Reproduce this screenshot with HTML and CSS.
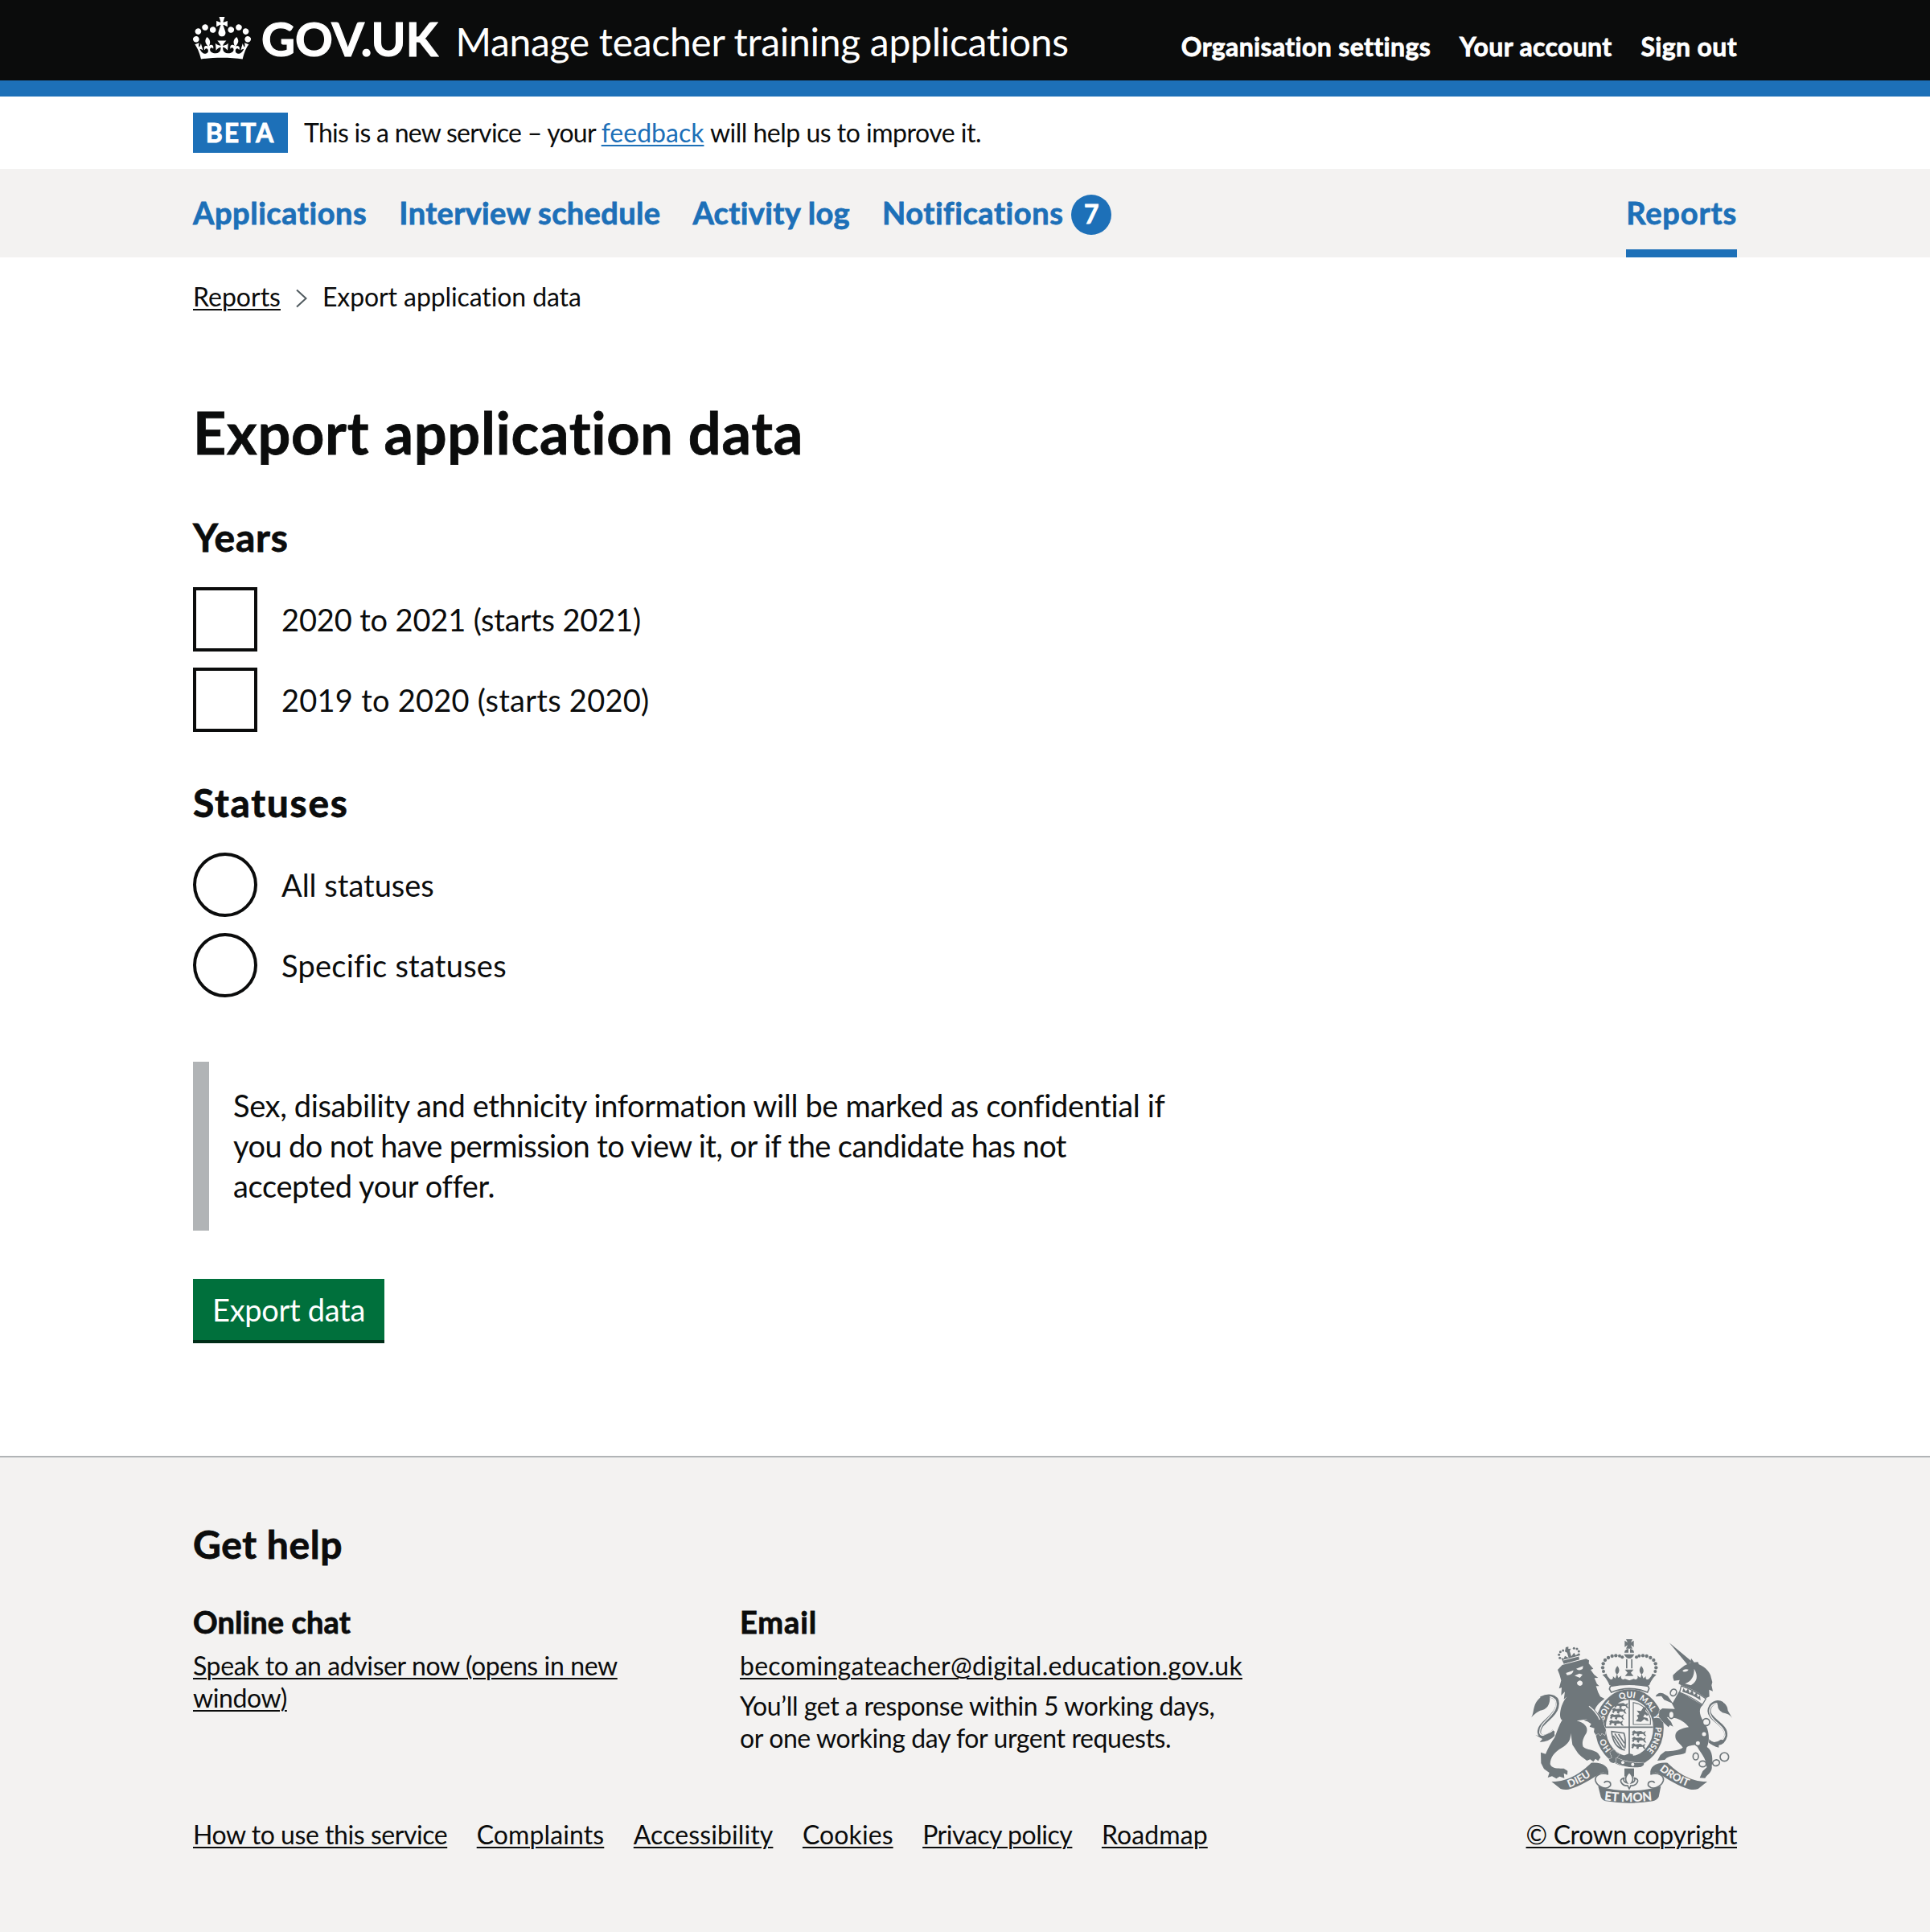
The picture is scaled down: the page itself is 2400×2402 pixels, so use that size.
FILE: index.html
```
<!DOCTYPE html>
<html lang="en">
<head>
<meta charset="utf-8">
<title>Export application data - Manage teacher training applications - GOV.UK</title>
<link rel="stylesheet" href="styles.css">
</head>
<body>
<header class="header">
  <div class="container header-row">
    <svg class="crown" viewBox="0 0 132 97" aria-hidden="true"><path fill="currentColor" fill-rule="evenodd" d="M25 30.2c3.5 1.5 7.7-.2 9.1-3.7 1.5-3.6-.2-7.8-3.9-9.2-3.6-1.4-7.6.3-9.1 3.9-1.4 3.5.3 7.5 3.9 9zM9 39.5c3.6 1.5 7.8-.2 9.2-3.7 1.5-3.6-.2-7.8-3.9-9.1-3.6-1.5-7.6.2-9.1 3.8-1.4 3.5.3 7.5 3.8 9zM4.4 57.2c3.5 1.5 7.7-.2 9.1-3.8 1.5-3.6-.2-7.7-3.9-9.1-3.5-1.5-7.6.3-9.1 3.8-1.4 3.5.3 7.6 3.9 9.1zm38.3-21.4c3.5 1.5 7.7-.2 9.1-3.8 1.5-3.6-.2-7.7-3.9-9.1-3.6-1.5-7.6.3-9.1 3.8-1.3 3.6.4 7.7 3.9 9.1zm64.4-5.6c-3.6 1.5-7.8-.2-9.1-3.7-1.5-3.6.2-7.8 3.8-9.2 3.6-1.4 7.7.3 9.2 3.9 1.3 3.5-.4 7.5-3.9 9zm15.9 9.3c-3.6 1.5-7.7-.2-9.1-3.7-1.5-3.6.2-7.8 3.7-9.1 3.6-1.5 7.7.2 9.2 3.8 1.5 3.5-.3 7.5-3.8 9zm4.7 17.7c-3.6 1.5-7.8-.2-9.2-3.8-1.5-3.6.2-7.7 3.9-9.1 3.6-1.5 7.7.3 9.2 3.8 1.3 3.5-.4 7.6-3.9 9.1zM89.3 35.8c-3.6 1.5-7.8-.2-9.2-3.8-1.4-3.6.2-7.7 3.9-9.1 3.6-1.5 7.7.3 9.2 3.8 1.4 3.6-.3 7.7-3.9 9.1zM69.7 17.7l8.9 4.7V9.3l-8.9 2.8c-.2-.3-.5-.6-.9-.9L72.4 0H59.6l3.5 11.2c-.3.3-.6.5-.9.9l-8.8-2.8v13.1l8.8-4.7c.3.3.6.7.9.9l-5 15.4v.1c-.2.8-.4 1.6-.4 2.4 0 4.1 3.1 7.5 7 8.1h.2c.3 0 .7.1 1 .1.4 0 .7 0 1-.1h.2c4-.6 7.1-4.1 7.1-8.1 0-.8-.1-1.7-.4-2.4V34l-5.1-15.4c.4-.2.7-.6 1-.9zM66 92.8c16.9 0 32.8 1.1 47.1 3.2 4-16.9 8.9-26.7 14-33.5l-9.6-3.4c1 4.9 1.1 7.2 0 10.2-1.5-1.4-3-4.3-4.2-8.7L108.6 76c2.8-2 5-3.2 7.5-3.3-4.4 9.4-10 11.9-13.6 11.2-4.3-.8-6.3-4.6-5.6-7.9 1-4.7 5.7-5.9 8-.5 4.3-8.7-3-11.4-7.6-8.8 7.1-7.2 7.9-13.5 2.1-21.1-8 6.1-8.1 12.3-4.5 20.8-4.7-5.4-12.1-2.5-9.5 6.2 3.4-5.2 7.9-2 7.2 3.1-.6 4.3-6.4 7.8-13.5 7.2-10.3-.9-10.9-8-11.2-13.8 2.5-.5 7.1 1.8 11 7.3L80.2 60c-4.1 4.4-8 5.3-12.3 5.4 1.4-4.4 8-11.6 8-11.6H55.5s6.4 7.2 7.9 11.6c-4.2-.1-8-1-12.3-5.4l1.4 16.4c3.9-5.5 8.5-7.7 10.9-7.3-.3 5.8-.9 12.8-11.1 13.8-7.2.6-12.9-2.9-13.5-7.2-.7-5 3.8-8.3 7.1-3.1 2.7-8.7-4.6-11.6-9.4-6.2 3.7-8.5 3.6-14.7-4.6-20.8-5.8 7.6-5 13.9 2.2 21.1-4.7-2.6-11.9.1-7.7 8.8 2.3-5.5 7.1-4.2 8.1.5.7 3.3-1.3 7.1-5.7 7.9-3.5.7-9-1.8-13.5-11.2 2.5.1 4.7 1.3 7.5 3.3l-4.7-15.4c-1.2 4.4-2.7 7.2-4.3 8.7-1.1-3-.9-5.3 0-10.2l-9.5 3.4c5 6.9 9.9 16.7 14 33.5 14.8-2.1 30.8-3.2 47.7-3.2z"/></svg>
    <a class="logotype" href="#">GOV.UK</a>
    <a class="service-name" href="#">Manage teacher training applications</a>
    <nav class="account-nav">
      <a href="#">Organisation settings</a>
      <a href="#">Your account</a>
      <a href="#">Sign out</a>
    </nav>
  </div>
</header>
<div class="container phase-banner">
  <strong class="tag">BETA</strong>
  <p class="phase-text">This is a new service – your <a class="phase-link" href="#">feedback</a> <span class="phase-tail">will help us to improve it.</span></p>
</div>
<nav class="primary-nav">
  <div class="container primary-row">
    <a class="wide" href="#">Applications</a>
    <a href="#">Interview schedule</a>
    <a href="#">Activity log</a>
    <a class="wide" href="#">Notifications</a>
    <span class="badge">7</span>
    <a class="current" href="#">Reports</a>
  </div>
</nav>
<div class="container">
  <div class="breadcrumbs">
    <a href="#">Reports</a>
    <svg class="chevron" viewBox="0 0 16 24" aria-hidden="true"><path d="M2 1.5 13.5 12 2 22.5" fill="none" stroke="#505a5f" stroke-width="2"/></svg>
    <span>Export application data</span>
  </div>
  <main>
    <h1>Export application data</h1>
    <h2 class="years">Years</h2>
    <div class="options">
      <label class="option"><span class="box"></span><span class="option-text year-a">2020 to 2021 (starts 2021)</span></label>
      <label class="option"><span class="box"></span><span class="option-text year-b">2019 to 2020 (starts 2020)</span></label>
    </div>
    <h2 class="statuses">Statuses</h2>
    <div class="options">
      <label class="option"><span class="box round"></span><span class="option-text">All statuses</span></label>
      <label class="option"><span class="box round"></span><span class="option-text specific">Specific statuses</span></label>
    </div>
    <div class="inset">Sex, disability and ethnicity information will be marked as confidential if <span class="inset-mid">you do not have permission to view it, or if the candidate has not</span> accepted your offer.</div>
    <button class="button" type="button">Export data</button>
  </main>
</div>
<footer class="footer">
  <div class="container footer-row">
    <div class="footer-main">
      <h2 class="help">Get help</h2>
      <div class="help-columns">
        <section>
          <h3>Online chat</h3>
          <p><a href="#">Speak to an adviser now (opens in new window)</a></p>
        </section>
        <section>
          <h3 class="email">Email</h3>
          <p><a class="address" href="#">becomingateacher@digital.education.gov.uk</a></p>
          <p>You’ll get a response within 5 working days,<br>or one working day for urgent requests.</p>
        </section>
      </div>
      <div class="meta-links">
        <a class="tight" href="#">How to use this service</a>
        <a href="#">Complaints</a>
        <a href="#">Accessibility</a>
        <a href="#">Cookies</a>
        <a class="tight" href="#">Privacy policy</a>
        <a href="#">Roadmap</a>
      </div>
    </div>
    <div class="copyright">
      <svg class="crest" viewBox="0 0 768 648" aria-hidden="true">
        <defs>
          <path id="motto" d="M317 442A97 113 0 1 1 412 461"/>
          <path id="dieu" d="M154 577Q208 558 262 514"/>
          <path id="droit" d="M490 512Q546 557 614 580"/>
          <path id="etmon" d="M284 624Q378 636 472 624"/>
          <g id="walker"><path d="M0 6l8-6 8 4 18-2 8 5 10-5-4 10 6 10-8-2-4-7-14 1-2 8-8-3 2-6-10-1-4 8-6-4 3-6z"/></g>
          <g id="half-crown">
            <circle cx="352" cy="91" r="6"/><circle cx="342" cy="86" r="6"/><circle cx="328" cy="85" r="6.500"/><circle cx="314" cy="87" r="6.500"/><circle cx="300" cy="93" r="6.500"/><circle cx="288" cy="102" r="6.500"/><circle cx="281" cy="115" r="6.500"/><circle cx="279" cy="130" r="6.500"/><circle cx="282" cy="144" r="6"/>
            <path d="M379 178 362 172C352 178 344 170 349 160L337 168 333 155C344 146 342 134 334 124 325 134 322 146 332 155L326 170 317 162C320 174 310 178 304 170L297 162 293 152 278 157C292 170 298 180 304 196Q340 188 379 188Z"/>
          </g>
          <g id="scroll">
            <path d="M88 555 122 582Q136 587 152 584C196 574 238 544 272 523 280 519 290 521 300 528 304 500 280 482 236 485 200 520 152 556 88 555Z"/>
            <path d="M300 528C270 518 248 534 252 552 258 572 290 590 308 570 312 552 290 550 284 560" fill="none" stroke="currentColor" stroke-width="5"/>
          </g>
        </defs>
        <g fill="currentColor">
          <path d="M366 24h24l-6 12 11-7v24l-11-7 6 13h-24l6-13-11 7V29l11 7z"/>
          <path d="M360 74a18 15 0 0 1 15-14v14zM381 60a18 15 0 0 1 15 14h-15zM358 80h39q-8 16-19 16t-20-16z"/>
          <path d="M366 98h5v35h-5zM385 98h5v35h-5zM362 137l32 0-10 12 10 12h-32l10-12z"/>
          <use href="#half-crown"/><use href="#half-crown" transform="translate(757) scale(-1 1)"/>
          <path d="M304 186Q378 172 452 186L448 199Q378 186 310 199z"/>
        </g>
        <!-- garter and shield -->
        <ellipse cx="379" cy="355" rx="108" ry="125" fill="none" stroke="currentColor" stroke-width="39"/>
        <path d="M308 199Q378 186 448 199L452 208 446 222Q378 194 311 222L304 210Z" fill="#f3f2f1" stroke="currentColor" stroke-width="5"/>
        <g fill="none" stroke="currentColor">
          <path d="M378 250V458M290 352H467" stroke-width="5"/>
          <path d="M393 260V342H457V320Q448 282 412 265Z" stroke-width="3.500"/>
          <path d="M310 368 358 374Q366 395 362 432M312 368Q318 428 362 438M324 376 358 428M338 378 360 412M318 384 350 432" stroke-width="5"/>
        </g>
        <g fill="currentColor">
          <use href="#walker" x="314" y="280"/><use href="#walker" x="306" y="302"/><use href="#walker" x="303" y="325"/>
          <use href="#walker" x="322" y="260"/>
          <path d="M402 330l10-12-6-10 10-4-10-14 16 2 10-16 10 4-4 12 12 14-6 4-8-6-6 10 16 4 4 12-8-2-8-6-12 10z"/>
          <use href="#walker" x="388" y="364"/><use href="#walker" x="388" y="388"/><use href="#walker" x="386" y="412"/>
          <path d="M348 462l30-12 14 4 2 20-30 8z"/>
        </g>
        <g class="crest-text motto">
          <text><textPath href="#motto" startOffset="6%">HO</textPath></text>
          <text><textPath href="#motto" startOffset="28.500%">SOIT</textPath></text>
          <text><textPath href="#motto" startOffset="45.500%">QUI</textPath></text>
          <text><textPath href="#motto" startOffset="59.500%">MAL</textPath></text>
          <text><textPath href="#motto" startOffset="69.500%">Y</textPath></text>
          <text><textPath href="#motto" startOffset="84.500%">PENSE</textPath></text>
        </g>
        <g class="outlined">
          <path d="M306 446q14-16 22-2l14 10-10 10 4 14-16 8q-16-2-18-14l12-6z"/>
          <path d="M330 466Q380 490 432 484 436 494 422 500 370 508 328 484z"/>
        </g>
        <circle cx="354" cy="484" r="6" fill="#f3f2f1"/><circle cx="391" cy="491" r="6" fill="#f3f2f1"/>
        <!-- lion -->
        <path d="M48 244C86 226 118 240 108 278 98 318 40 336 42 372 46 396 72 390 96 366" fill="none" stroke="currentColor" stroke-width="13"/>
        <path d="M52 246C86 230 112 244 104 278 94 316 42 334 44 372 48 390 72 384 92 364" fill="none" stroke="#f3f2f1" stroke-width="4"/>
        <g fill="currentColor">
          <path d="M12 316C26 300 14 262 52 238L80 234C86 252 78 284 52 289 34 293 26 304 12 316ZM28 381Q50 390 66 380L98 366 100 384Q80 406 44 408L54 396Z"/>
          <circle cx="119" cy="94" r="4.500"/><circle cx="116" cy="82" r="4.500"/><circle cx="121" cy="71" r="4.500"/><circle cx="131" cy="66" r="4.500"/><circle cx="172" cy="58" r="4.500"/><circle cx="183" cy="60" r="4.500"/><circle cx="190" cy="69" r="4.500"/><circle cx="190" cy="81" r="4.500"/>
          <path d="M141 54l10-2 0 8 9-1-4 9 6 20 10-14 6 10 10-6 4 22-58 16-10-22 10 2 4-10 14 8-6-20-8-4z" />
        </g>
        <path d="M132 102 190 87" stroke="#f3f2f1" stroke-width="3"/>
        <path class="outlined" d="M111 138 128 120 217 97 228 103 227 115 244 134 234 138 247 156 262 168 248 169 257 190 266 199 254 199 262 222 270 238 286 246C264 262 254 274 250 288L262 302C274 312 282 330 284 346L291 362 287 382 276 374 270 384 263 374 254 382 246 370 248 356 230 350 236 340 222 331 208 326 224 322 182 328C208 334 228 352 218 374 202 398 202 412 206 425 222 438 246 434 262 450L271 464 262 478 252 470 244 481 232 472 220 477 200 462C184 450 178 434 166 418L160 374C160 400 150 415 125 430 98 446 84 464 83 490 90 508 110 506 134 506L148 515 147 530 134 524 136 542 118 536 106 544 90 535 74 540 80 522 60 508 49 486 48 446 66 452C80 420 90 405 100 390 110 365 116 345 128 325 114 322 118 270 146 238L134 248 138 220 124 234 126 204 116 208 124 178 118 156Z"/>
        <g fill="#f3f2f1"><path d="M142 150 170 140Q168 156 146 158zM180 134 206 124 204 135Q190 144 180 134zM174 160l18-8 12 4-10 12zM183 185q10-14 20-2 4 12-8 15-12-2-12-13z"/></g>
        <path d="M228 274Q256 296 268 324" fill="none" stroke="#f3f2f1" stroke-width="4"/>
        <!-- unicorn -->
        <path d="M672 398C690 420 728 424 738 384 744 342 676 326 676 292 678 264 704 250 726 264" fill="none" stroke="currentColor" stroke-width="12"/>
        <path d="M674 392C692 414 726 416 735 382 738 346 678 330 677 292 680 268 702 256 722 267" fill="none" stroke="#f3f2f1" stroke-width="4"/>
        <g fill="currentColor">
          <path d="M704 254Q742 254 746 290L762 318Q752 302 726 298 708 288 708 270zM672 398Q694 418 720 398L736 402Q722 416 712 418L712 428Q690 424 672 404z"/>
          <path d="M527 37 610 106 596 120Z"/>
          <path fill-rule="evenodd" d="M541 158 556 144 584 122 606 112 609 95 620 110 634 109 638 118C664 128 682 152 683 166L688 184 685 196 690 218 676 212 677 238 664 244Q620 210 572 196L562 190 566 176 545 179Q540 168 541 158ZM577 141q8-8 22-4-4 10-20 8zM620 134q24 40-12 62l-22-6q36-14 34-56z"/>
        </g>
        <path class="outlined" d="M564 218 652 270C632 286 644 316 660 338 676 362 680 402 668 426 690 440 690 474 686 496 690 520 668 530 661 542L641 541 652 516 667 502C666 466 642 448 628 418 612 420 596 422 592 428L588 448C568 460 530 452 510 474L483 477 494 456 512 442C540 440 562 440 578 428 566 410 548 404 550 382 552 364 574 356 600 352 588 334 566 322 548 318L518 314 534 332 542 350 530 344 524 352 505 334 489 314 490 290 502 282 548 284 536 262 508 250 498 236 476 238Q484 220 504 226L522 236 540 262Z"/>
        <path d="M572 198Q622 214 664 246L651 268Q612 240 566 222Z" fill="#f3f2f1" stroke="currentColor" stroke-width="4"/>
        <path d="M576 220l4-14 9 12 9-10 5 18 10-12 6 18 11-10 3 18 9-6 2 18q-32-22-68-32z" fill="currentColor"/>
        <g fill="#f3f2f1" stroke="currentColor" stroke-width="5">
          <ellipse cx="543" cy="223" rx="11" ry="13" transform="rotate(30 543 223)"/><ellipse cx="535" cy="306" rx="10" ry="14"/><circle cx="665" cy="333" r="13"/><circle cx="657" cy="378" r="10"/><circle cx="634" cy="412" r="10"/><ellipse cx="626" cy="461" rx="10" ry="13"/><ellipse cx="652" cy="489" rx="13" ry="11"/><ellipse cx="702" cy="485" rx="13" ry="11" transform="rotate(-20 702 485)"/><circle cx="733" cy="463" r="16"/>
        </g>
        <!-- motto scrolls -->
        <g fill="currentColor">
          <use href="#scroll"/><use href="#scroll" transform="translate(757) scale(-1 1)"/>
          <path d="M262 572Q378 606 496 572L488 612Q482 624 466 628 378 642 290 628 276 624 272 612Z"/>
          <path d="M360 506h36v30h-36z"/>
        </g>
        <path d="M378 520q22 22 8 40 16-4 12-18 16 4 10 16-8 14-24 12l-6 12-6-12q-16 2-24-12-6-12 10-16-4 14 12 18-14-18 8-40z" fill="#f3f2f1" stroke="currentColor" stroke-width="5"/>
        <g class="crest-text">
          <text font-size="39"><textPath href="#dieu">DIEU</textPath></text>
          <text font-size="39"><textPath href="#droit">DROIT</textPath></text>
          <text font-size="46"><textPath href="#etmon">ET MON</textPath></text>
        </g>
      </svg>
      <a href="#">© Crown copyright</a>
    </div>
  </div>
</footer>
</body>
</html>
```
FILE: styles.css
```
* {
  box-sizing: border-box;
}

body {
  margin: 0;
  background: #fff;
  color: #0b0c0c;
  font: 400 32px/40px Lato, "Liberation Sans", sans-serif;
  font-variant-ligatures: none;
}

h1, h2, h3, p {
  margin: 0;
}

a {
  color: inherit;
  text-decoration-thickness: 2px;
  text-underline-offset: 3px;
}

h1, h2, h3,
.account-nav,
.primary-nav {
  -webkit-text-stroke: 0.8px currentColor;
}

.container {
  width: 1920px;
  margin: 0 auto;
}

/* Header */
.header {
  height: 120px;
  background: #0b0c0c;
  border-bottom: 20px solid #1d70b8;
  color: #fff;
}

.header a {
  text-decoration: none;
}

.header-row {
  display: flex;
  align-items: baseline;
  padding-top: 18px;
}

.crown {
  align-self: flex-start;
  width: 72px;
  height: 53px;
  margin-top: 3px;
}

.logotype {
  margin-left: 13px;
  font-size: 58px;
  font-weight: 700;
  line-height: 60px;
  -webkit-text-stroke: 1.2px currentColor;
}

.service-name {
  margin-left: 22px;
  font-size: 48px;
  line-height: 60px;
  letter-spacing: -0.3px;
}

.account-nav {
  display: flex;
  gap: 36px;
  margin-left: auto;
  font-weight: 700;
  letter-spacing: 0.35px;
}

/* Phase banner */
.phase-banner {
  display: flex;
  align-items: flex-start;
  height: 90px;
  padding-top: 20px;
}

.tag {
  width: 118px;
  height: 50px;
  padding-top: 5px;
  background: #1d70b8;
  color: #fff;
  text-align: center;
  letter-spacing: 2px;
  -webkit-text-stroke: 0.8px currentColor;
}

.phase-text {
  margin-left: 20px;
  padding-top: 5px;
  letter-spacing: -0.74px;
}

.phase-link {
  color: #1d70b8;
  letter-spacing: 0;
}

.phase-tail {
  letter-spacing: -0.5px;
}

/* Primary navigation */
.primary-nav {
  background: #f3f2f1;
  color: #1d70b8;
  font-size: 38px;
  font-weight: 700;
  line-height: 50px;
  letter-spacing: 0.35px;
}

.primary-row {
  display: flex;
  gap: 40px;
  height: 110px;
}

.primary-row a {
  padding-top: 29px;
  text-decoration: none;
}

.primary-row .wide {
  letter-spacing: 0.55px;
}

.badge {
  width: 50px;
  height: 50px;
  margin: 32px 0 0 -30px;
  border-radius: 50%;
  background: #1d70b8;
  color: #fff;
  font-size: 32px;
  line-height: 48px;
  text-align: center;
}

.primary-row .current {
  margin-left: auto;
  border-bottom: 10px solid #1d70b8;
  letter-spacing: 0.85px;
}

/* Breadcrumbs */
.breadcrumbs {
  display: flex;
  align-items: center;
  padding-top: 29px;
}

.breadcrumbs span {
  letter-spacing: -0.1px;
}

.chevron {
  width: 16px;
  height: 24px;
  margin: 3px 18px 0;
}

/* Form */
h1 {
  margin-top: 108px;
  font-size: 72px;
  line-height: 80px;
  letter-spacing: 0.72px;
}

h2 {
  font-size: 48px;
  line-height: 60px;
  letter-spacing: 0.6px;
}

.years {
  margin-top: 61px;
  letter-spacing: 0.8px;
}

.statuses {
  margin-top: 58px;
  letter-spacing: 1.7px;
}

.options {
  display: grid;
  gap: 20px;
  margin-top: 32px;
}

.option {
  display: flex;
  gap: 30px;
}

.box {
  width: 80px;
  height: 80px;
  border: 4px solid #0b0c0c;
}

.round {
  border-radius: 50%;
}

.option-text {
  padding-top: 15px;
  font-size: 38px;
  line-height: 50px;
}

.year-a {
  letter-spacing: -0.15px;
}

.year-b,
.specific {
  letter-spacing: 0.25px;
}

.inset {
  width: 1280px;
  margin-top: 80px;
  padding: 29px 60px 31px 30px;
  border-left: 20px solid #b1b4b6;
  font-size: 38px;
  line-height: 50px;
  letter-spacing: -0.36px;
}

.inset-mid {
  letter-spacing: -0.6px;
}

.button {
  display: block;
  width: 238px;
  height: 80px;
  margin-top: 60px;
  padding: 0;
  border: 0;
  border-bottom: 4px solid #002d18;
  background: #00703c;
  color: #fff;
  font: 400 38px/50px Lato, "Liberation Sans", sans-serif;
  letter-spacing: -0.3px;
}

/* Footer */
.footer {
  height: 592px;
  margin-top: 140px;
  border-top: 2px solid #b1b4b6;
  background: #f3f2f1;
}

.footer-row {
  display: flex;
  justify-content: space-between;
  padding-top: 78px;
}

.help-columns {
  display: grid;
  grid-template-columns: 560px 660px;
  column-gap: 120px;
  margin-top: 41px;
  letter-spacing: -0.39px;
}

h3 {
  font-size: 38px;
  line-height: 50px;
  letter-spacing: 0.1px;
}

.email {
  letter-spacing: 0.9px;
}

.help-columns p {
  margin-top: 10px;
}

.address {
  letter-spacing: 0.25px;
}

.meta-links {
  display: flex;
  gap: 36.5px;
  margin-top: 80px;
  letter-spacing: 0.1px;
}

.tight {
  letter-spacing: -0.45px;
}

.copyright {
  display: flex;
  flex-direction: column;
  align-items: flex-end;
  padding-top: 140px;
  letter-spacing: -0.35px;
}

.crest {
  width: 256px;
  height: 216px;
  margin: 0 4px 15px 0;
  color: #6f777b;
}

.crest-text {
  fill: #f3f2f1;
  font-weight: 900;
  letter-spacing: 0;
}

.motto {
  font-size: 31px;
  text-anchor: middle;
}

.outlined {
  fill: currentColor;
  stroke: #f3f2f1;
  stroke-width: 3px;
  paint-order: stroke;
}
```
